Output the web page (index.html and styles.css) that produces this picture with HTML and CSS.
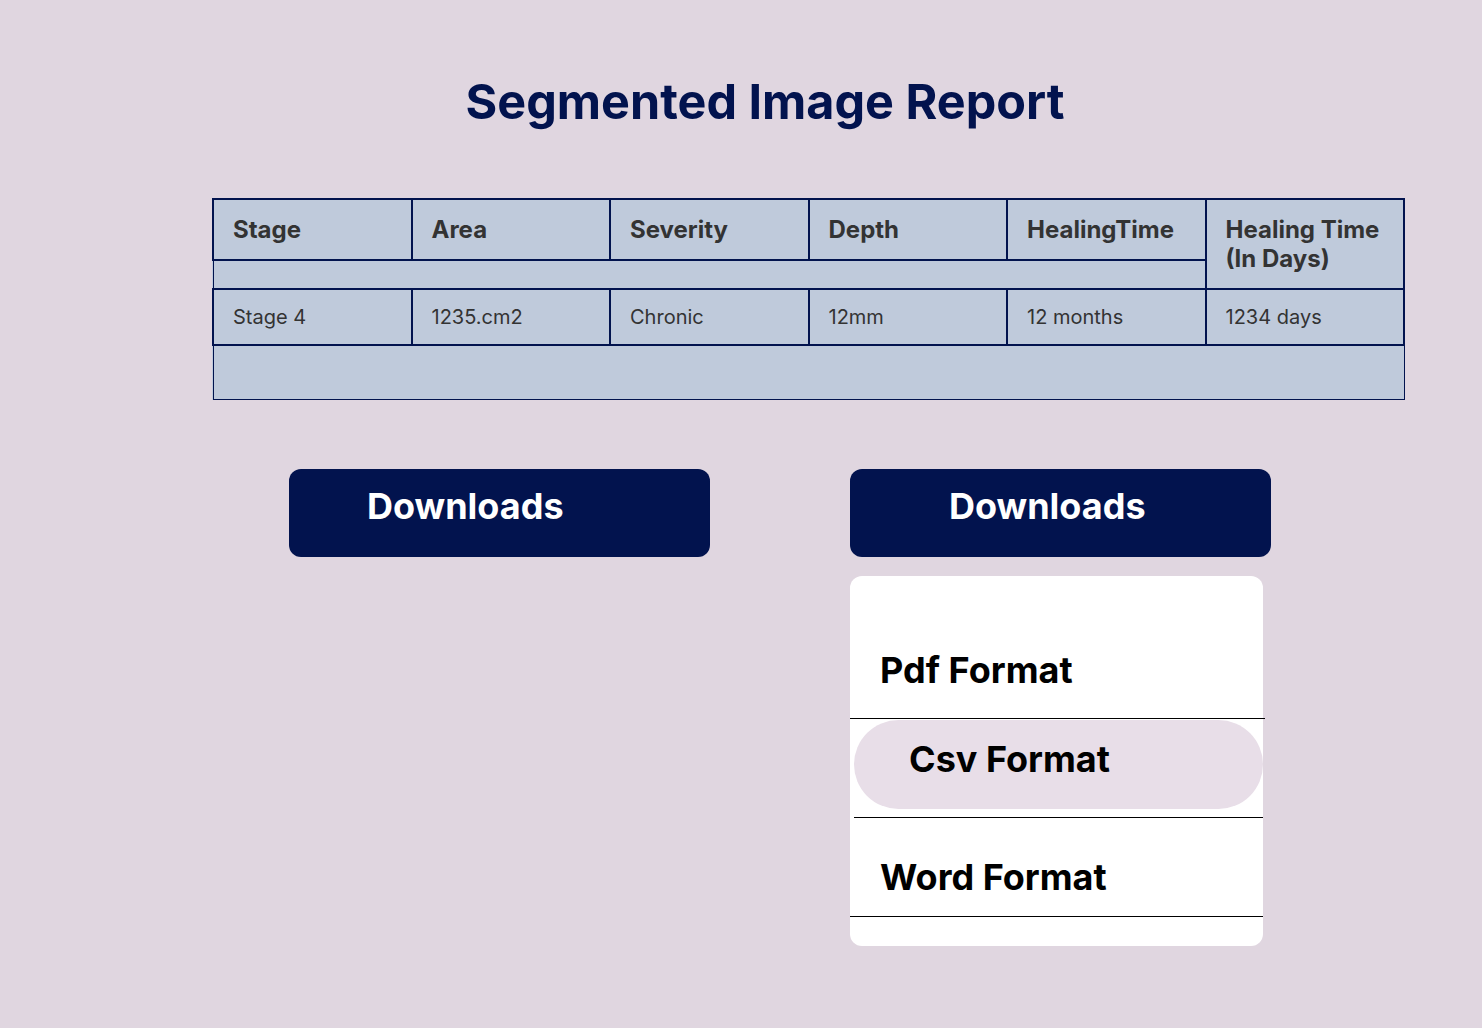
FILE: index.html
```html
<!DOCTYPE html>
<html lang="en">
<head>
<meta charset="utf-8">
<title>Segmented Image Report</title>
<link rel="stylesheet" href="styles.css">
</head>
<body>
<main class="page">
  <h1 class="title">Segmented Image Report</h1>

  <div class="table-wrap">
    <table class="report">
      <colgroup>
        <col><col><col><col><col><col>
      </colgroup>
      <tr class="head-row">
        <th>Stage</th>
        <th>Area</th>
        <th>Severity</th>
        <th>Depth</th>
        <th>HealingTime</th>
        <th rowspan="2" class="tall">Healing Time<br>(In Days)</th>
      </tr>
      <tr class="gap-row">
        <td colspan="5"></td>
      </tr>
      <tr class="data-row">
        <td>Stage 4</td>
        <td>1235.cm2</td>
        <td>Chronic</td>
        <td>12mm</td>
        <td>12 months</td>
        <td>1234 days</td>
      </tr>
      <tr class="empty-row">
        <td colspan="6"></td>
      </tr>
    </table>
  </div>

  <div class="actions">
    <div class="col">
      <button class="btn btn-left" type="button">Downloads</button>
    </div>
    <div class="col">
      <button class="btn btn-right" type="button">Downloads</button>
      <div class="menu">
        <div class="item item-pdf">Pdf Format</div>
        <div class="item item-csv"><span class="pill">Csv Format</span></div>
        <div class="item item-word">Word Format</div>
      </div>
    </div>
  </div>
</main>
</body>
</html>
```

FILE: styles.css
```css
* { box-sizing: border-box; }

html, body {
  margin: 0;
  padding: 0;
  background: #e0d6e0;
  font-family: "Inter", "Noto Sans", "Liberation Sans", sans-serif;
}

.page {
  min-height: 1028px;
  padding-top: 73px;
}

.title {
  margin: 0;
  padding-left: 48px;
  text-align: center;
  font-size: 48.5px;
  line-height: 58px;
  font-weight: 700;
  color: #02134e;
}

.table-wrap {
  margin-top: 67px;
  padding-left: 212px;
}

.report {
  width: 1193px;
  table-layout: fixed;
  border-collapse: collapse;
  background: #bfcadb;
  color: #333333;
}

.report th,
.report td {
  padding: 0 0 0 19px;
  text-align: left;
  vertical-align: middle;
}

.report th {
  font-size: 24px;
  font-weight: 700;
  line-height: 29px;
}

.head-row th {
  height: 61px;
  border: 2px solid #02134e;
}

.head-row th.tall {
  padding-top: 0;
}

.gap-row td {
  height: 29px;
  border-left: 1px solid #02134e;
  border-bottom: 2px solid #02134e;
}

.data-row td {
  height: 56px;
  font-size: 20px;
  font-weight: 400;
  border: 2px solid #02134e;
}

.empty-row td {
  height: 54px;
  border-left: 1px solid #02134e;
  border-right: 1px solid #02134e;
  border-bottom: 1px solid #02134e;
}

.actions {
  margin-top: 69px;
  padding-left: 289px;
  display: flex;
  gap: 140px;
  align-items: flex-start;
}

.col {
  display: flex;
  flex-direction: column;
  gap: 19px;
}

.btn {
  width: 421px;
  height: 88px;
  border: none;
  border-radius: 12px;
  background: #02134e;
  color: #ffffff;
  font-family: inherit;
  font-size: 36px;
  font-weight: 700;
  line-height: 44px;
  text-align: left;
  padding: 15px 0 29px 0;
  display: block;
}

.btn-left { padding-left: 78px; }
.btn-right { padding-left: 99px; }

.menu {
  width: 413px;
  background: #ffffff;
  border-radius: 12px;
  padding-bottom: 29px;
  color: #000000;
  font-size: 36px;
  font-weight: 700;
  line-height: 44px;
}

.item-pdf {
  padding: 72px 0 26px 30px;
  border-bottom: 1px solid #000000;
  margin-right: -2px;
}

.item-csv {
  padding: 1px 0 8px 4px;
  border-bottom: 1px solid #000000;
  margin-left: 4px;
}

.item-csv .pill {
  display: block;
  margin-left: -4px;
  height: 89px;
  padding: 17px 0 0 55px;
  background: #e8dee8;
  border-radius: 45px;
}

.item-word {
  padding: 37px 0 17px 30px;
  border-bottom: 1px solid #000000;
}
```
